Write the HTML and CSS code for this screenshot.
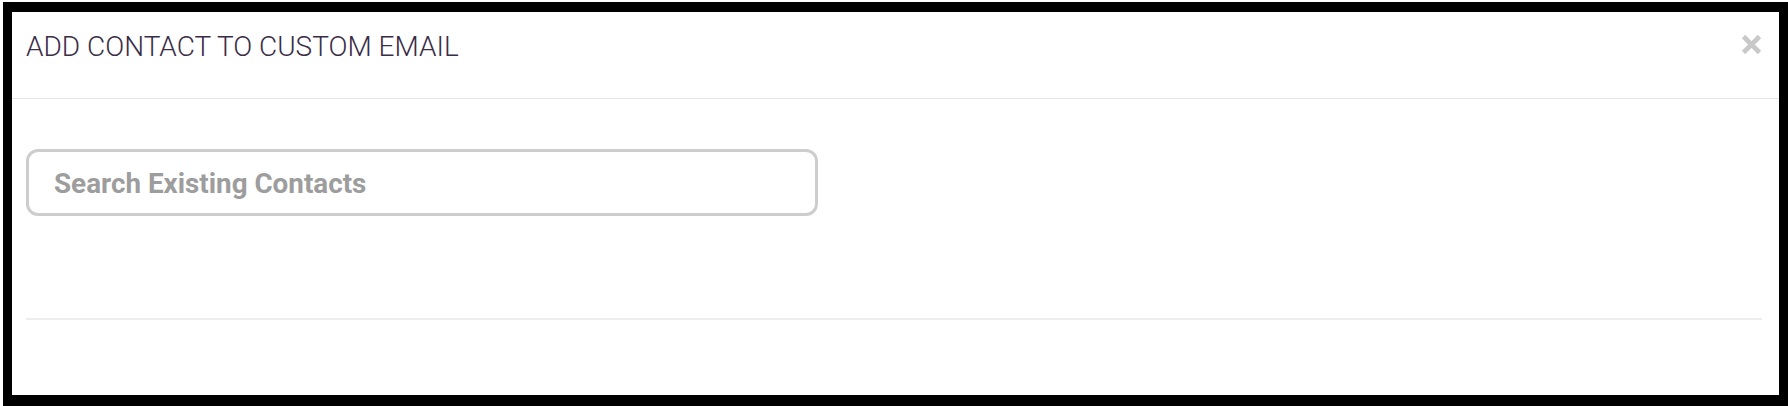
FILE: index.html
```html
<!DOCTYPE html>
<html lang="en">
<head>
<meta charset="utf-8">
<title>Add Contact to Custom Email</title>
<link rel="stylesheet" href="styles.css">
</head>
<body>
<div class="frame">
  <div class="modal-header">
    <h4 class="modal-title">ADD CONTACT TO CUSTOM EMAIL</h4>
    <button class="close" type="button" aria-label="Close">
      <svg width="21" height="21" viewBox="0 0 21 21"><path d="M2.5 2.5 L18.5 18.5 M18.5 2.5 L2.5 18.5" stroke="#c9c9c9" stroke-width="4.6" stroke-linecap="butt" fill="none"/></svg>
    </button>
  </div>
  <div class="modal-body">
    <input class="search" type="text" placeholder="Search Existing Contacts">
    <div class="divider"></div>
  </div>
</div>
</body>
</html>
```
FILE: styles.css
```css
* { box-sizing: border-box; }
html, body { margin: 0; padding: 0; background: #fff; }
body { font-family: Roboto, "Liberation Sans", sans-serif; }

.frame {
  margin: 2px 0 0 3px;
  width: 1785px;
  height: 404px;
  border-style: solid;
  border-color: #000;
  border-width: 10px 9px 11px 9px;
  background: #fff;
}

.modal-header {
  display: flex;
  justify-content: space-between;
  align-items: flex-start;
  height: 87px;
  padding: 19px 17px 0 14px;
  border-bottom: 1px solid #e5e5e5;
}

.modal-title {
  margin: 0;
  font-size: 28px;
  line-height: 32px;
  font-weight: 300;
  color: #3b2d47;
  letter-spacing: 0;
}

.close {
  margin: 3px 0 0 0;
  padding: 0;
  border: 0;
  background: none;
  width: 21px;
  height: 21px;
  display: block;
  cursor: pointer;
}
.close svg { display: block; }

.modal-body {
  padding: 50px 0 0 14px;
}

.search {
  display: block;
  width: 792px;
  height: 67px;
  border: 3px solid #cdcdcd;
  border-radius: 12px;
  padding: 1px 0 0 25px;
  font-family: Roboto, "Liberation Sans", sans-serif;
  font-size: 27.8px;
  font-weight: 700;
  color: #555;
  background: #fff;
  outline: none;
}
.search::placeholder { color: #9d9d9d; opacity: 1; }

.divider {
  height: 2px;
  background: #eeeeee;
  margin: 102px 17px 0 0;
}
```
